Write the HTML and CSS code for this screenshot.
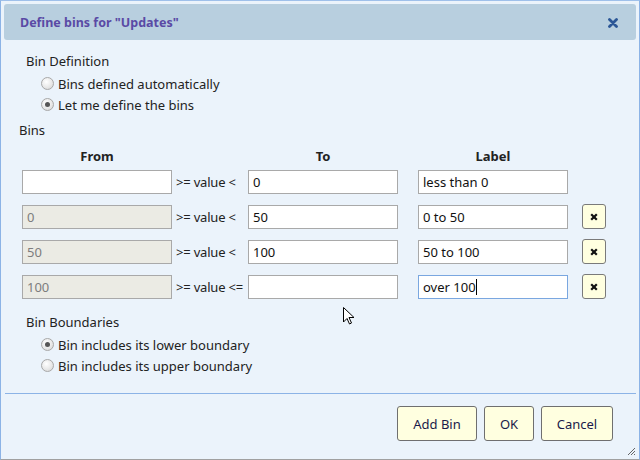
FILE: index.html
```html
<!DOCTYPE html>
<html>
<head>
<meta charset="utf-8">
<link rel="stylesheet" href="styles.css">
</head>
<body>
<div class="dialog">
  <div class="titlebar">
    <span class="title">Define bins for "Updates"</span>
    <svg class="close" width="10" height="10" viewBox="0 0 10 10"><path d="M1.5 1.5 L8.5 8.5 M8.5 1.5 L1.5 8.5" stroke="#2b5797" stroke-width="2.8" stroke-linecap="round"/></svg>
  </div>
  <div class="content">
    <div class="group-label">Bin Definition</div>
    <div class="radios">
      <label class="radio"><span class="dot"></span>Bins defined automatically</label>
      <label class="radio"><span class="dot on"></span>Let me define the bins</label>
    </div>
    <div class="section-label">Bins</div>
    <div class="grid">
      <div class="head">From</div><div></div><div class="head">To</div><div class="head">Label</div><div></div>

      <div class="field"></div><div class="op">&gt;= value &lt;</div><div class="field">0</div><div class="field">less than 0</div><div></div>

      <div class="field dis">0</div><div class="op">&gt;= value &lt;</div><div class="field">50</div><div class="field">0 to 50</div><div class="xbtn"><svg width="8" height="8" viewBox="0 0 8 8"><path d="M1.2 1.2 L6.8 6.8 M6.8 1.2 L1.2 6.8" stroke="#111" stroke-width="2.2"/></svg></div>

      <div class="field dis">50</div><div class="op">&gt;= value &lt;</div><div class="field">100</div><div class="field">50 to 100</div><div class="xbtn"><svg width="8" height="8" viewBox="0 0 8 8"><path d="M1.2 1.2 L6.8 6.8 M6.8 1.2 L1.2 6.8" stroke="#111" stroke-width="2.2"/></svg></div>

      <div class="field dis">100</div><div class="op">&gt;= value &lt;=</div><div class="field"></div><div class="field focus">over 100<span class="caret"></span></div><div class="xbtn"><svg width="8" height="8" viewBox="0 0 8 8"><path d="M1.2 1.2 L6.8 6.8 M6.8 1.2 L1.2 6.8" stroke="#111" stroke-width="2.2"/></svg></div>
    </div>
    <div class="group-label gb">Bin Boundaries</div>
    <div class="radios">
      <label class="radio"><span class="dot on"></span>Bin includes its lower boundary</label>
      <label class="radio"><span class="dot"></span>Bin includes its upper boundary</label>
    </div>
  </div>
  <div class="footer">
    <button class="btn add">Add Bin</button>
    <button class="btn ok">OK</button>
    <button class="btn cancel">Cancel</button>
  </div>
  <svg class="grip" width="10" height="10" viewBox="0 0 10 10"><path d="M9 2 L2 9 M9 5 L5 9 M9 8 L8 9" stroke="#666" stroke-width="1"/></svg>
  <svg class="cursor" width="14" height="20" viewBox="0 0 14 20"><path d="M1.5 1.5 L1.5 16 L5 12.5 L7.5 18 L9.5 17 L7 11.5 L12 11.5 Z" fill="#fff" stroke="#000" stroke-width="1" stroke-linejoin="round"/></svg>
</div>
</body>
</html>
```
FILE: styles.css
```css
* { box-sizing: border-box; }
html, body { margin: 0; padding: 0; }
body {
  width: 640px;
  height: 460px;
  font-family: "Noto Sans", "Open Sans", sans-serif;
  font-size: 13px;
  color: #222;
  background: #fff;
}
.dialog {
  position: relative;
  width: 640px;
  height: 460px;
  background: #ebf3fb;
  border: 1px solid #8cb3e6;
  border-top-color: #9fc0ea;
  border-bottom-color: #a0a0a0;
  padding: 3px 3px 0 3px;
  display: flex;
  flex-direction: column;
}
.titlebar {
  height: 36px;
  background: #b8cfdf;
  border-radius: 3px;
  display: flex;
  align-items: center;
  justify-content: space-between;
  padding: 0 18px 0 16px;
  flex: none;
}
.title {
  font-weight: bold;
  font-size: 12.5px;
  color: #5a4aa5;
}
.close { display: block; margin-top: 1px; }
.content {
  padding: 12px 0 0 15px;
  flex: none;
}
.group-label {
  padding-left: 7px;
  line-height: 18px;
}
.radios {
  padding-left: 22px;
  display: flex;
  flex-direction: column;
  margin-top: 3px;
}
.radio {
  display: flex;
  align-items: center;
  height: 21px;
  gap: 4px;
}
.dot {
  width: 13px;
  height: 13px;
  border-radius: 50%;
  border: 1px solid #a8a8a8;
  background: radial-gradient(circle at 40% 35%, #fff 0%, #e6e6e6 60%, #cfcfcf 100%);
  position: relative;
  flex: none;
}
.dot.on::after {
  content: "";
  position: absolute;
  left: 3px; top: 3px;
  width: 5px; height: 5px;
  border-radius: 50%;
  background: #555;
}
.section-label {
  margin-top: 6px;
  line-height: 18px;
}
.grid {
  display: grid;
  grid-template-columns: 150px 76px 150px 170px 24px;
  column-gap: 0;
  row-gap: 11px;
  margin-left: 3px;
  margin-top: 9px;
}
.grid > :nth-child(5n+4) { margin-left: 20px; }
.grid > :nth-child(5n) { margin-left: 14px; }
.head {
  font-weight: bold;
  text-align: center;
  line-height: 16px;
  margin-bottom: -5px;
}
.field {
  height: 24px;
  width: 150px;
  background: #fff;
  border: 1px solid #a9a9a9;
  padding: 0 4px;
  display: flex;
  align-items: center;
  color: #111;
}
.field.dis {
  background: #ebebe4;
  color: #7d7d7d;
}
.field.focus {
  border-color: #7aa7e0;
}
.caret {
  display: inline-block;
  width: 1px;
  height: 16px;
  background: #000;
}
.op {
  display: flex;
  align-items: center;
  padding-left: 4px;
  white-space: nowrap;
  letter-spacing: -0.2px;
}
.xbtn {
  width: 24px;
  height: 25px;
  margin-top: -1px;
  background: #ffffe0;
  border: 1px solid #7a7a7a;
  border-radius: 3px;
  display: flex;
  align-items: center;
  justify-content: center;
}
.gb { margin-top: 14px; }
.footer {
  margin-top: auto;
  border-top: 1px solid #8cb3e6;
  height: 66px;
  display: flex;
  justify-content: flex-end;
  align-items: flex-start;
  gap: 7px;
  padding: 12px 23px 0 0;
  margin-left: 1px;
}
.btn {
  height: 35px;
  background: #ffffe0;
  border: 1px solid #6f6f6f;
  border-radius: 3px;
  font-family: inherit;
  font-size: 13px;
  color: #1a1a4a;
  padding: 0;
}
.add { width: 80px; }
.ok { width: 50px; }
.cancel { width: 72px; }
.grip { position: absolute; right: 3px; bottom: 3px; }
.cursor { position: absolute; left: 341px; top: 305px; }
```
